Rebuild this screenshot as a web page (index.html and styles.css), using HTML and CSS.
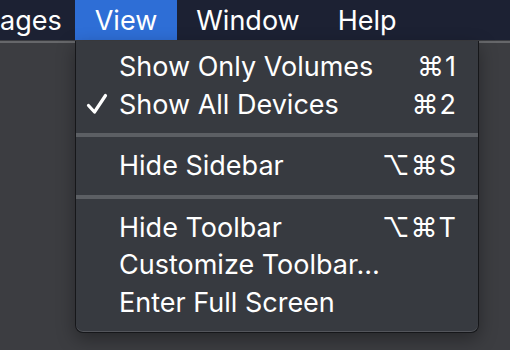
FILE: index.html
```html
<!DOCTYPE html>
<html lang="en">
<head>
    <meta charset="UTF-8">
    <title>View Menu</title>
    <link rel="stylesheet" href="styles.css">
</head>
<body>
    <div class="menubar">
        <span class="menubar-item">ages</span>
        <span class="menubar-item active">View</span>
        <span class="menubar-item">Window</span>
        <span class="menubar-item">Help</span>
    </div>

    <div class="desktop">
        <div class="window-top"></div>

        <div class="menu">
            <div class="menu-item">
                <span class="check"></span>
                <span class="label">Show Only Volumes</span>
                <span class="shortcut">⌘1</span>
            </div>
            <div class="menu-item">
                <span class="check">
                    <svg width="22" height="22" viewBox="0 0 22 22">
                        <path d="M2.5 12.5 L8.5 19 L19.5 2.5" fill="none" stroke="#fff" stroke-width="3.2" stroke-linecap="round" stroke-linejoin="round"/>
                    </svg>
                </span>
                <span class="label">Show All Devices</span>
                <span class="shortcut">⌘2</span>
            </div>
            <div class="separator"></div>
            <div class="menu-item">
                <span class="check"></span>
                <span class="label">Hide Sidebar</span>
                <span class="shortcut">⌥⌘S</span>
            </div>
            <div class="separator"></div>
            <div class="menu-item">
                <span class="check"></span>
                <span class="label">Hide Toolbar</span>
                <span class="shortcut">⌥⌘T</span>
            </div>
            <div class="menu-item">
                <span class="check"></span>
                <span class="label">Customize Toolbar…</span>
                <span class="shortcut"></span>
            </div>
            <div class="menu-item">
                <span class="check"></span>
                <span class="label">Enter Full Screen</span>
                <span class="shortcut"></span>
            </div>
        </div>
    </div>
</body>
</html>
```

FILE: styles.css
```css
:root {
    --bar-bg: #1c2133;
    --highlight: #2e6ed6;
    --desk-bg: #3c3d41;
    --menu-bg: #373a40;
    --sep: #5c5f64;
    --text: #ffffff;
}

html, body {
    margin: 0;
    padding: 0;
    height: 100%;
    overflow: hidden;
}

body {
    width: 510px;
    height: 350px;
    font-family: Inter, "Noto Sans", sans-serif;
    background: var(--desk-bg);
    color: var(--text);
}

.menubar {
    height: 40px;
    background: var(--bar-bg);
    display: flex;
    align-items: stretch;
    white-space: nowrap;
}

.menubar-item {
    display: flex;
    align-items: center;
    padding: 0 19px;
    font-size: 27px;
    line-height: 1;
}

.menubar-item:first-child {
    padding: 0 13px 0 0;
}

.menubar-item.active {
    padding: 0 20px 0 20px;
    background: var(--highlight);
}

.desktop {
    position: relative;
    height: 310px;
}

.window-top {
    height: 2px;
    background: #66676a;
    margin-top: 1px;
}

.menu {
    position: absolute;
    left: 75px;
    top: 0;
    width: 402px;
    padding: 7px 0 11px;
    background: var(--menu-bg);
    border: 1px solid #16171a;
    border-top: none;
    border-radius: 0 0 8px 8px;
    box-shadow: inset 0 -1px 0 rgba(255, 255, 255, 0.14),
                0 6px 18px rgba(0, 0, 0, 0.35);
}

.menu-item {
    display: flex;
    align-items: center;
    height: 37.5px;
    font-size: 27px;
    white-space: nowrap;
}

.check {
    width: 43px;
    display: flex;
    justify-content: flex-end;
}

.check svg {
    margin-right: 11px;
}

.label {
    flex: 1;
}

.shortcut {
    padding-right: 21px;
    letter-spacing: 1px;
}

.separator {
    height: 4px;
    background: var(--sep);
    margin: 10px 0;
}
```
